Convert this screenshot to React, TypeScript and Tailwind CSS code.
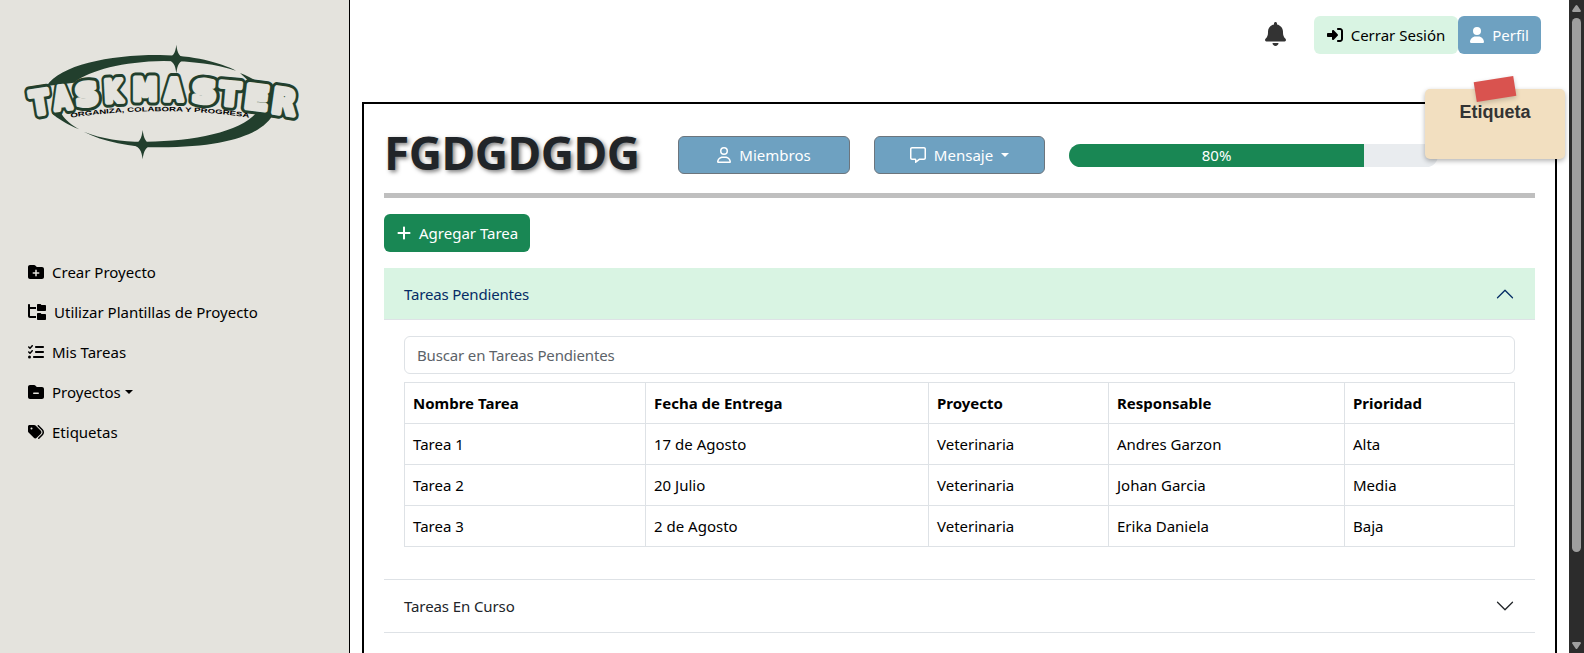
import React from "react";
import {
  FaBell,
  FaFolderMinus,
  FaFolderPlus,
  FaFolderTree,
  FaListCheck,
  FaPlus,
  FaRegMessage,
  FaRegUser,
  FaRightToBracket,
  FaTags,
  FaUser,
} from "react-icons/fa6";

type Glyph = { c: string; x: number; y: number; w: number; s: number; r: number };

const LOGO_LETTERS: Glyph[] = [
  { c: "T", x: 125, y: 251, w: 55, s: 96, r: -9 },
  { c: "A", x: 191, y: 237, w: 52, s: 93, r: -7 },
  { c: "S", x: 263, y: 225, w: 68, s: 90, r: -5 },
  { c: "K", x: 341, y: 215, w: 54, s: 90, r: -3 },
  { c: "M", x: 435, y: 211, w: 74, s: 90, r: 0 },
  { c: "A", x: 521, y: 211, w: 54, s: 90, r: 1 },
  { c: "S", x: 611, y: 217, w: 72, s: 90, r: 3 },
  { c: "T", x: 687, y: 225, w: 60, s: 93, r: 5 },
  { c: "E", x: 766, y: 237, w: 72, s: 97, r: 7 },
  { c: "R", x: 847, y: 251, w: 72, s: 103, r: 8 },
];

function Letters({ className, width }: { className: string; width: number }) {
  return (
    <g className={className} strokeWidth={width} strokeLinejoin="round">
      {LOGO_LETTERS.map((l, i) => (
        <text
          key={i}
          transform={`translate(${l.x} ${l.y}) rotate(${l.r})`}
          x={-l.w / 2}
          y={0}
          fontSize={l.s}
          fontWeight={700}
          fontFamily="DejaVu Sans, sans-serif"
          textLength={l.w}
          lengthAdjust="spacingAndGlyphs"
        >
          {l.c}
        </text>
      ))}
    </g>
  );
}

function Logo() {
  return (
    <svg viewBox="0 0 960 420" className="block h-[140px] w-[320px]">
      <g className="fill-[#223f2d]">
        <path d="M140 168C180 105 330 74 480 75C580 76 660 97 708 122C650 103 580 93 490 93C370 95 270 120 222 158Z" />
        <path d="M720 129C742 138 760 146 776 158L745 152Z" />
        <path d="M155 248L185 252C195 270 215 285 238 298C205 285 170 265 155 248Z" />
        <path d="M251 305C310 328 370 336 440 335C580 335 720 305 768 250L822 250C790 310 690 352 480 352C390 352 310 335 251 305Z" />
        <path d="M529 44C532 70 538 80 557 86C538 93 532 104 529 130C526 104 520 93 498 86C520 80 526 70 529 44Z" />
        <path d="M428 300C431 326 438 338 454 345C438 352 431 362 428 388C425 362 418 352 401 345C418 338 425 326 428 300Z" />
      </g>
      <Letters className="fill-[#223f2d] stroke-[#223f2d]" width={33} />
      <Letters className="fill-[#e4e3dd] stroke-[#e4e3dd]" width={15} />
      <path id="tagline" d="M212 263Q480 224 748 263" fill="none" />
      <text
        fontSize={19}
        fontWeight={700}
        fontFamily="Liberation Sans, sans-serif"
        className="fill-black"
      >
        <textPath href="#tagline" textLength={537} lengthAdjust="spacingAndGlyphs">
          ORGANIZA, COLABORA Y PROGRESA
        </textPath>
      </text>
    </svg>
  );
}

function Caret() {
  return (
    <span className="inline-block border-x-[4.8px] border-t-[4.8px] border-x-transparent border-t-current" />
  );
}

function Chevron({ className }: { className: string }) {
  return (
    <svg viewBox="0 0 16 16" className={className} fill="currentColor">
      <path
        fillRule="evenodd"
        d="M1.646 4.646a.5.5 0 0 1 .708 0L8 10.293l5.646-5.647a.5.5 0 0 1 .708.708l-6 6a.5.5 0 0 1-.708 0l-6-6a.5.5 0 0 1 0-.708"
      />
    </svg>
  );
}

const ROWS = [
  ["Tarea 1", "17 de Agosto", "Veterinaria", "Andres Garzon", "Alta"],
  ["Tarea 2", "20 Julio", "Veterinaria", "Johan Garcia", "Media"],
  ["Tarea 3", "2 de Agosto", "Veterinaria", "Erika Daniela", "Baja"],
];

const HEADERS = ["Nombre Tarea", "Fecha de Entrega", "Proyecto", "Responsable", "Prioridad"];

function Sidebar() {
  return (
    <aside className="flex w-[350px] shrink-0 flex-col border-r border-black bg-[#e4e3dd] pt-[30px]">
      <Logo />
      <nav className="mt-[82px] flex flex-col pl-7 text-black">
        <a className="flex h-10 items-center gap-2">
          <FaFolderPlus className="h-4 w-4" />
          <span>Crear Proyecto</span>
        </a>
        <a className="flex h-10 items-center gap-2">
          <FaFolderTree className="h-4 w-[18px]" />
          <span>Utilizar Plantillas de Proyecto</span>
        </a>
        <a className="flex h-10 items-center gap-2">
          <FaListCheck className="h-4 w-4" />
          <span>Mis Tareas</span>
        </a>
        <a className="flex h-10 items-center gap-2">
          <FaFolderMinus className="h-4 w-4" />
          <span className="flex items-center gap-1">
            Proyectos
            <Caret />
          </span>
        </a>
        <a className="flex h-10 items-center gap-2">
          <FaTags className="h-4 w-4" />
          <span>Etiquetas</span>
        </a>
      </nav>
    </aside>
  );
}

function StickyLabel() {
  return (
    <div className="absolute top-[-15px] right-[-10px] h-[70px] w-[140px] rounded-[5px] bg-[#f2dfc0] pt-[11px] text-center shadow-[0_2px_5px_rgba(0,0,0,0.3)]">
      <div className="absolute top-[-10px] left-[50px] h-5 w-10 -rotate-[9deg] bg-[#d9534f] shadow-[0_2px_5px_rgba(0,0,0,0.2)]" />
      <span className="relative font-['Liberation_Sans',sans-serif] text-[18px] leading-6 font-bold text-[#333]">
        Etiqueta
      </span>
    </div>
  );
}

function Scrollbar() {
  return (
    <div className="flex w-[15px] shrink-0 flex-col items-center bg-[#2c2c2c] pt-[5px] pb-[4px]">
      <svg viewBox="0 0 9 7" className="h-[7px] w-[9px] fill-[#9f9f9f]">
        <path d="M3.6 0.6Q4.5 -0.4 5.4 0.6L8.8 5.6Q9 7 8 7H1Q0 7 .2 5.6Z" />
      </svg>
      <div className="mt-[6px] h-[534px] w-[9px] rounded-full bg-[#9f9f9f]" />
      <svg viewBox="0 0 9 7" className="mt-auto h-[7px] w-[9px] rotate-180 fill-[#9f9f9f]">
        <path d="M3.6 0.6Q4.5 -0.4 5.4 0.6L8.8 5.6Q9 7 8 7H1Q0 7 .2 5.6Z" />
      </svg>
    </div>
  );
}

export default function App() {
  return (
    <div className="flex h-[653px] w-full overflow-hidden bg-white font-['Noto_Sans',sans-serif] text-[15px] leading-6 text-[#212529]">
      <Sidebar />
      <main className="flex min-w-0 flex-1 flex-col pr-3 pl-3">
        <header className="flex h-[102px] shrink-0 items-start pt-4 pr-4">
          <FaBell className="mt-[6px] mr-7 ml-auto h-6 w-[21px] text-[#333]" />
          <button className="flex h-[38px] w-36 items-center justify-center gap-2 rounded-md bg-[#d9f4e3] text-black">
            <FaRightToBracket className="h-4 w-4" />
            <span>Cerrar Sesión</span>
          </button>
          <button className="flex h-[38px] w-[83px] items-center justify-center gap-2 rounded-md bg-[#6ea1c1] text-white">
            <FaUser className="h-4 w-[14px]" />
            <span>Perfil</span>
          </button>
        </header>

        <section className="relative h-[700px] shrink-0 border-2 border-black px-5">
          <StickyLabel />
          <div className="flex h-[89px] items-center pt-[15px]">
            <h1 className="w-[294px] pb-2 text-[46px] leading-[58px] font-bold tracking-[-0.5px] whitespace-nowrap [text-shadow:2px_2px_4px_rgba(0,0,0,0.5)]">
              FGDGDGDG
            </h1>
            <button className="mb-[2px] flex h-[38px] w-[172px] items-center justify-center gap-2 rounded-md border border-[#6c757d] bg-[#6ea1c1] text-white">
              <FaRegUser className="h-4 w-[14px]" />
              <span>Miembros</span>
            </button>
            <button className="mb-[2px] ml-6 flex h-[38px] w-[171px] items-center justify-center gap-2 rounded-md border border-[#6c757d] bg-[#6ea1c1] text-white">
              <FaRegMessage className="h-4 w-4" />
              <span>Mensaje</span>
              <Caret />
            </button>
            <div className="mb-[2px] ml-6 h-[23px] w-[369px] overflow-hidden rounded-full bg-[#e9ecef]">
              <div className="h-full w-[80%] bg-[#198754] text-center leading-[23px] text-white">
                80%
              </div>
            </div>
          </div>
          <div className="h-[5px] bg-[#bfbfbf]" />
          <button className="mt-4 flex h-[38px] w-[146px] items-center gap-2 rounded-md bg-[#198754] pl-[13px] text-white">
            <FaPlus className="h-4 w-[14px]" />
            <span>Agregar Tarea</span>
          </button>

          <div className="mt-4 flex h-[52px] items-center justify-between border-b border-[#dee2e6] bg-[#d9f4e3] px-5 text-[#052c65]">
            <span className="tracking-[-0.18px]">Tareas Pendientes</span>
            <Chevron className="h-5 w-5 rotate-180" />
          </div>
          <div className="border-b border-[#dee2e6] px-5 pt-4 pb-8">
            <div className="flex h-[38px] items-center rounded-md border border-[#dee2e6] px-3 tracking-[-0.15px] text-[#5c6369]">
              Buscar en Tareas Pendientes
            </div>
            <table className="mt-2 w-[calc(100%-1px)] table-fixed border-collapse text-left text-black">
              <colgroup>
                <col className="w-[241px]" />
                <col className="w-[283px]" />
                <col className="w-[180px]" />
                <col className="w-[236px]" />
                <col className="w-[170px]" />
              </colgroup>
              <thead>
                <tr>
                  {HEADERS.map((h) => (
                    <th key={h} className="h-[41px] border border-[#dee2e6] px-2 py-0 font-bold">
                      {h}
                    </th>
                  ))}
                </tr>
              </thead>
              <tbody>
                {ROWS.map((row) => (
                  <tr key={row[0]}>
                    {row.map((cell, i) => (
                      <td key={i} className="h-[41px] border border-[#dee2e6] px-2 py-0">
                        {cell}
                      </td>
                    ))}
                  </tr>
                ))}
              </tbody>
            </table>
          </div>
          <div className="flex h-[53px] items-center justify-between border-b border-[#dee2e6] px-5">
            <span className="tracking-[-0.1px]">Tareas En Curso</span>
            <Chevron className="h-5 w-5" />
          </div>
        </section>
      </main>
      <Scrollbar />
    </div>
  );
}
